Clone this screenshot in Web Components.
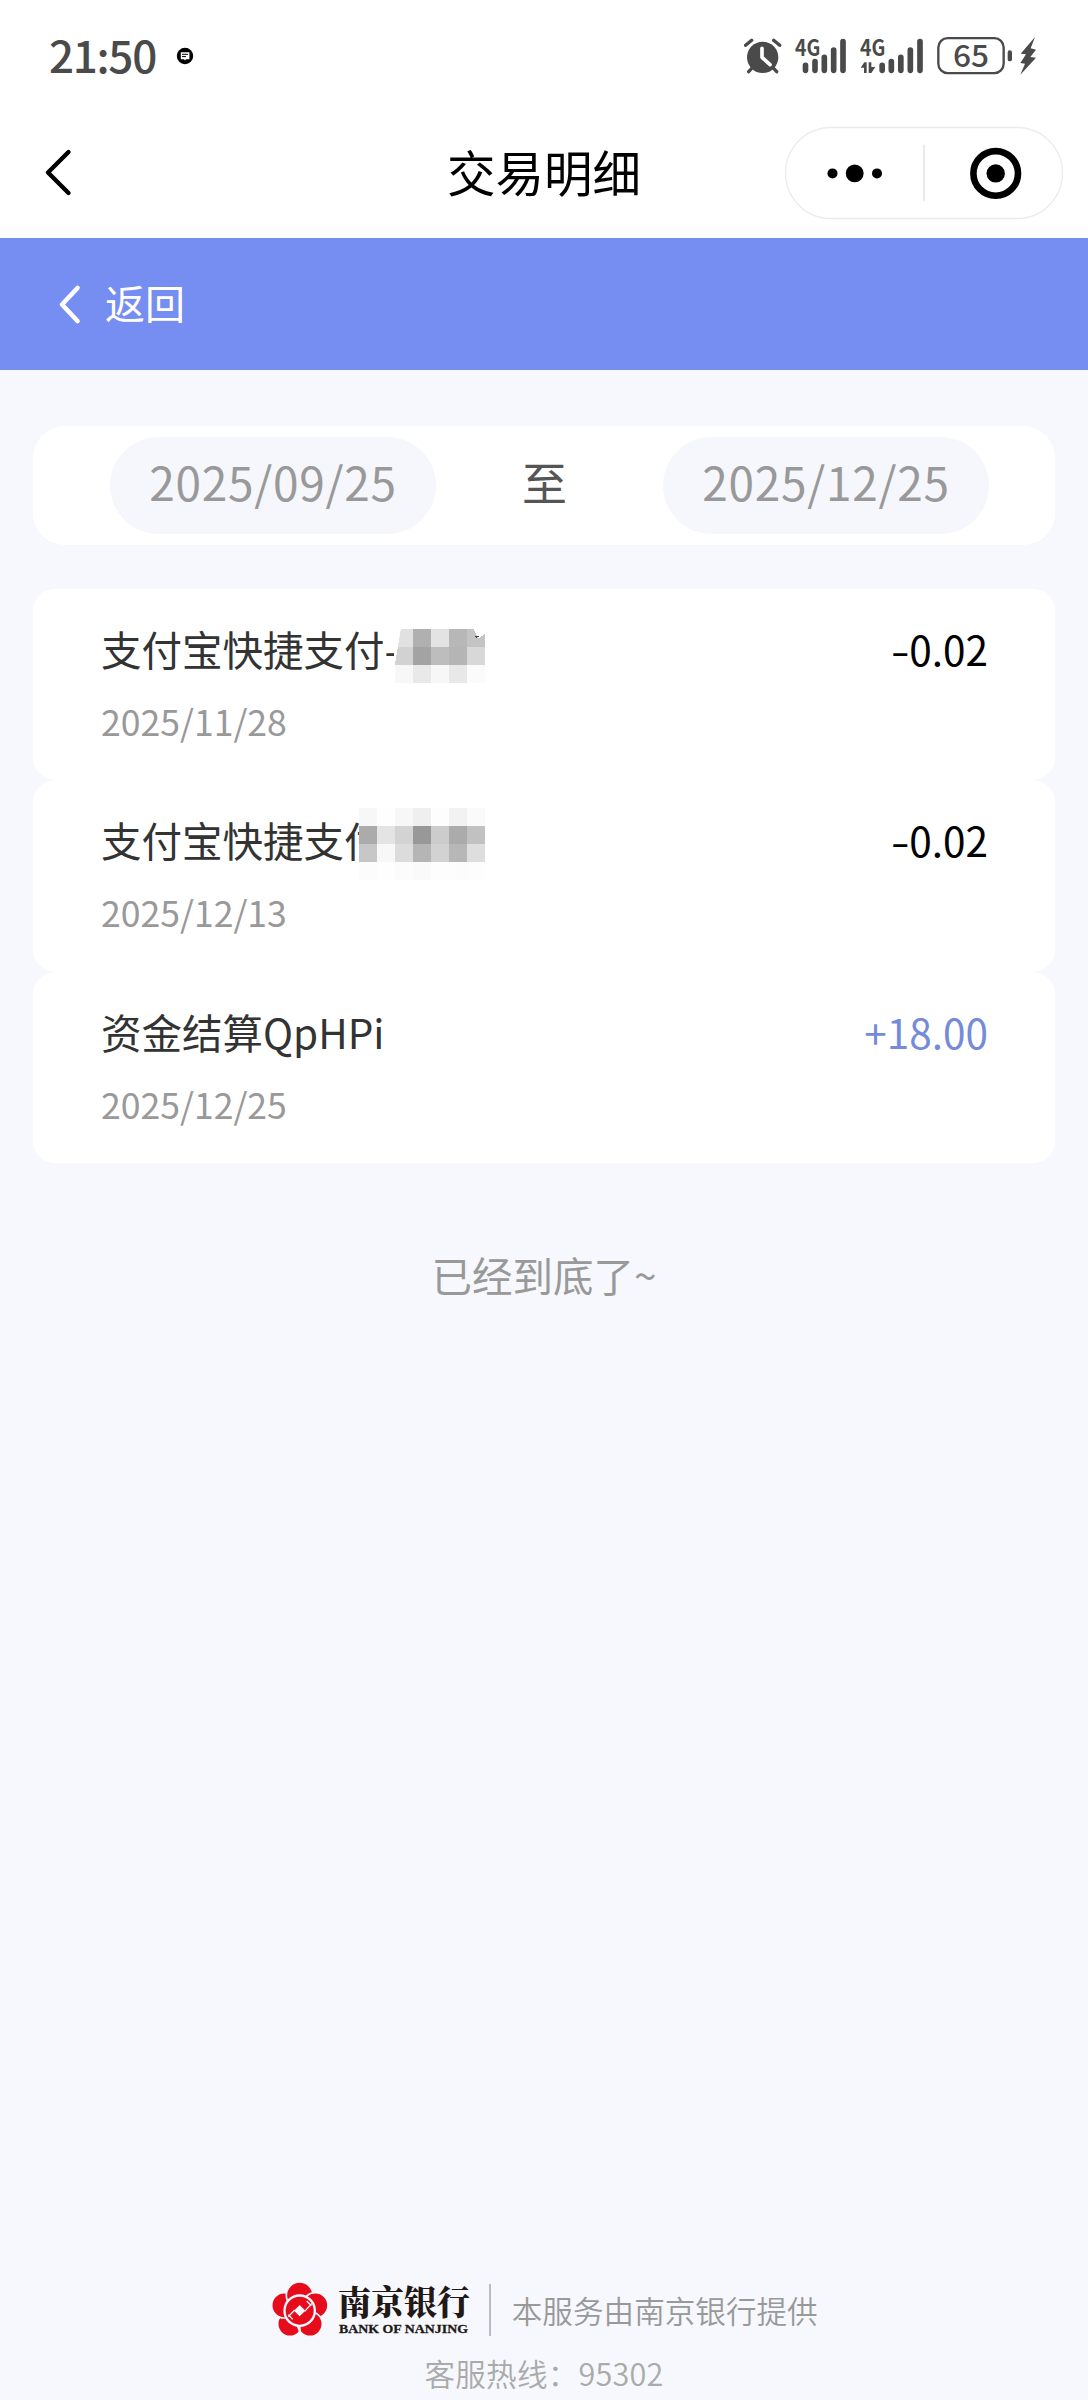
<!DOCTYPE html>
<html lang="zh-CN">
<head>
<meta charset="utf-8">
<title>交易明细</title>
<style>
body{margin:0;background:#f6f8fd;font-family:"Noto Sans CJK SC",sans-serif}
</style>
</head>
<body>
<bank-page></bank-page>
<script>
function define(name, html){
  const t=document.createElement('template');
  t.innerHTML=html;
  customElements.define(name,class extends HTMLElement{
    constructor(){super();this.attachShadow({mode:'open'}).append(t.content.cloneNode(true));}
  });
}

define('status-bar',`
<style>
:host{display:flex;height:112px;box-sizing:border-box;padding:0 0 0 49px;background:#fff;color:#4a4a4a;align-items:flex-start}
.time{font-size:44px;font-weight:500;line-height:64px;margin-top:22px;width:108px;white-space:nowrap;letter-spacing:-1.300px}
.msg{width:18px;height:18px;margin:47px 0 0 19px}
.right{width:368px;height:80px;margin:20px 0 0 auto}
svg{display:block}
</style>
<div class="time">21:50</div>
<svg class="msg" viewBox="0 0 18 18"><circle cx="9" cy="9" r="8.2" fill="#000"/><path d="M4.800 5.200h8.600v7H10l-1 1.300-1-1.300H4.800z" fill="#fff"/><path d="M6 7.300h6M6 9.600h4" stroke="#000" stroke-width="1"/></svg>
<svg class="right" viewBox="0 0 1104 240" fill="#4a4a4a" font-family="Noto Sans CJK SC, sans-serif">
  <circle cx="128" cy="112" r="47"/>
  <path d="M77 76l18-15M161 61l18 15M98 142l-12 13M158 142l12 13" stroke="#4a4a4a" stroke-width="10" stroke-linecap="round" fill="none"/>
  <path d="M126 85v27l24 22" stroke="#fff" stroke-width="11" stroke-linecap="round" stroke-linejoin="round" fill="none"/>
  <text x="225" y="107" font-size="66" font-weight="700" textLength="76" lengthAdjust="spacingAndGlyphs">4G</text>
  <path d="M256.500 136v15M285 125v26M313 112v39M341 90v61M369 65v86" stroke="#4a4a4a" stroke-width="17" stroke-linecap="round"/>
  <text x="420" y="107" font-size="66" font-weight="700" textLength="76" lengthAdjust="spacingAndGlyphs">4G</text>
  <path d="M422 143l11-16h7v32h-8v-16zM446 127h8v14h12l-12 18h-8z"/>
  <path d="M486.500 136v15M514 125v26M542.500 112v39M571 90v61M600 65v86" stroke="#4a4a4a" stroke-width="17" stroke-linecap="round"/>
  <rect x="655" y="54.500" width="196" height="105" rx="28" fill="none" stroke="#4a4a4a" stroke-width="7"/>
  <text x="699" y="142" font-size="91" font-weight="500" textLength="108" lengthAdjust="spacingAndGlyphs">65</text>
  <rect x="863" y="91" width="13" height="33" rx="6.500"/>
  <path d="M945 51l-43 50 16 2-17 26 14 2-14 33 47-51-17-2 17-22-16-4z"/>
</svg>`);

define('nav-capsule',`
<style>:host{display:block;width:280px;height:94px}svg{display:block}</style>
<svg width="280" height="94" viewBox="0 0 280 94">
<rect x="1.500" y="1.500" width="277" height="91" rx="45.500" fill="#fff" stroke="#ebebeb" stroke-width="1.300"/>
<path d="M140 19v56" stroke="#dcdcdc" stroke-width="1.200"/>
<circle cx="48.500" cy="47.400" r="5"/><circle cx="70.700" cy="47.400" r="8.900"/><circle cx="93" cy="47.400" r="5"/>
<circle cx="211.700" cy="47.400" r="22.300" fill="none" stroke="#000" stroke-width="6.600"/><circle cx="211.700" cy="47.400" r="9.200"/>
</svg>`);

define('nav-bar',`
<style>
:host{display:grid;grid-template-columns:304px 1fr 304px;height:126px;background:#fff;color:#000}
.back{margin:36px 0 0 43px}
.title{font-size:48.500px;line-height:118px;text-align:center;white-space:nowrap;font-weight:400}
nav-capsule{margin:14px 0 0 0}
</style>
<svg class="back" width="32" height="50" viewBox="0 0 32 50"><path d="M25.500 4L5 24.500l20.500 20.500" fill="none" stroke="#000" stroke-width="4.400" stroke-linecap="round" stroke-linejoin="round"/></svg>
<div class="title"><slot></slot></div>
<nav-capsule></nav-capsule>`);

define('return-bar',`
<style>
:host{display:flex;align-items:center;height:132px;background:#768df1;color:#fff;font-size:40px;line-height:60px;padding-left:56px}
svg{margin-right:21px}
span{margin-bottom:5px}
</style>
<svg width="28" height="44" viewBox="0 0 28 44"><path d="M21.500 6L6 22.500 21.500 39" fill="none" stroke="#fff" stroke-width="4.600" stroke-linecap="round" stroke-linejoin="round"/></svg>
<span><slot></slot></span>`);

define('date-pill',`
<style>:host{display:block;width:326px;height:97px;line-height:89px;border-radius:49px;background:#f6f7fc;color:#999;font-size:46px;text-align:center;letter-spacing:.7px}</style><slot></slot>`);

define('date-range',`
<style>
:host{display:flex;box-sizing:border-box;height:119px;margin:56px 33px 0;padding:0 66px 0 77px;background:#fff;border-radius:32px;align-items:center;justify-content:space-between}
.to{font-size:45px;line-height:89px;color:#555;height:97px;margin-right:10px}
</style>
<date-pill><slot name="from"></slot></date-pill><div class="to">至</div><date-pill><slot name="until"></slot></date-pill>`);

define('transaction-item',`
<style>
:host{display:flex;justify-content:space-between;box-sizing:border-box;height:191.300px;padding:30px 67px 0 68px;background:#fff;border-radius:22px;font-size:40.500px;line-height:60px;color:#333;white-space:nowrap;position:relative}
.date{font-size:35.600px;line-height:52px;color:#999;margin-top:16px}
.amount{color:var(--amount,#000)}
</style>
<div><div><slot name="title"></slot></div><div class="date"><slot name="date"></slot></div></div>
<div class="amount"><slot name="amount"></slot></div>
<slot name="mask"></slot>`);

define('minus-sign',`
<style>:host{display:inline-block;transform:scaleX(1.35);transform-origin:85% 50%}</style><slot></slot>`);

define('mosaic-mask',`
<style>:host{position:absolute;left:318px;top:0;width:160px;height:100px}svg{display:block}</style>
<svg width="160" height="100" shape-rendering="crispEdges"></svg>`);

{
  const Base=customElements.get('mosaic-mask');
  customElements.define('pixel-mask',class extends Base{
    connectedCallback(){
      const rows=this.getAttribute('rows').split('|').map(r=>r.split(' '));
      const top=+this.getAttribute('top');
      let s='';
      rows.forEach((r,j)=>r.forEach((c,i)=>{
        if(c!=='-')s+='<rect x="'+(8+i*18)+'" y="'+(top+j*18)+'" width="18" height="18" fill="#'+c+'"/>';
      }));
      if(this.hasAttribute('slant'))s+='<path d="M43 39.500h7L44 75h-1zM122 39.500h13v5l-8 5z" fill="#fff"/><path d="M123.500 47h5l-3 2z" fill="#444"/>';
      this.shadowRoot.querySelector('svg').innerHTML=s;
    }
  });
}

define('bank-logo',`
<style>
:host{display:flex;align-items:flex-start;color:#221815}
.word{margin-left:8px;width:136px}
svg{display:block;overflow:visible}
</style>
<svg width="56" height="54" viewBox="35 37 168 162">
<g fill="#e60c1b" stroke="#f6f8fd" stroke-width="5">
<circle cx="89" cy="163" r="37"/>
<circle cx="72" cy="107" r="38"/>
<circle cx="118" cy="77" r="40"/>
<circle cx="165" cy="107" r="38"/>
<circle cx="149" cy="163" r="37"/>
</g>
<path d="M118 160v42" stroke="#f6f8fd" stroke-width="6"/>
<circle cx="118" cy="123" r="49" fill="#f6f8fd"/>
<circle cx="118" cy="123" r="42" fill="#e60c1b"/>
<path d="M118 106l17 17-17 17-17-17z" fill="#f6f8fd"/>
<path d="M103 121l-19 20M133 125l22-24M84 135l13 14M139 94l14 14" stroke="#f6f8fd" stroke-width="4" fill="none"/>
</svg>
<svg class="word" width="136" height="58" viewBox="-2 0 136 58" fill="#221815">
<text x="0" y="33" font-family="Noto Serif CJK SC, Noto Sans CJK SC, sans-serif" font-size="34" font-weight="900" textLength="132" lengthAdjust="spacingAndGlyphs">南京银行</text>
<text x="1" y="51" font-family="Liberation Serif, serif" font-size="13.500" font-weight="700" textLength="129" lengthAdjust="spacingAndGlyphs" stroke="#221815" stroke-width=".3">BANK OF NANJING</text>
</svg>`);

define('page-footer',`
<style>
:host{display:flex;flex-direction:column;align-items:center;color:#999;font-size:30.600px;font-weight:350;line-height:44px;white-space:nowrap}
.row{display:flex;height:58px;margin-left:2px}
.line{width:1.500px;height:52px;background:#bcbcbc;margin:2px 21px 0 17px}
.by{margin-top:6px}
.tel{color:#aaa;margin-top:11px;letter-spacing:.2px}
</style>
<div class="row"><bank-logo></bank-logo><div class="line"></div><div class="by"><slot name="provider"></slot></div></div>
<div class="tel"><slot name="hotline"></slot></div>`);

define('bank-page',`
<style>
:host{display:flex;flex-direction:column;width:1088px;height:2400px;overflow:hidden;background:#f6f8fd}
.list{display:flex;flex-direction:column;margin:44px 33px 0}
.end{text-align:center;color:#999;font-size:40.500px;line-height:60px;margin-top:82px}
page-footer{margin-top:auto;height:118px}
</style>
<status-bar></status-bar>
<nav-bar>交易明细</nav-bar>
<return-bar>返回</return-bar>
<date-range><span slot="from">2025/09/25</span><span slot="until">2025/12/25</span></date-range>
<div class="list">
<transaction-item><span slot="title">支付宝快捷支付-</span><span slot="date">2025/11/28</span><span slot="amount"><minus-sign>-</minus-sign>0.02</span>
<pixel-mask slot="mask" slant top="39.500" rows="- - e1e1e1 b0b0b0 e3e3e3 b7b7b7 c4c4c4|- - d2d2d2 a3a3a3 bdbdbd b5b5b5 d8d8d8|- - f7f7f7 e9e9e9 f7f7f7 e8e8e8 fbfbfb"></pixel-mask></transaction-item>
<transaction-item><span slot="title">支付宝快捷支付</span><span slot="date">2025/12/13</span><span slot="amount"><minus-sign>-</minus-sign>0.02</span>
<pixel-mask slot="mask" top="28" rows="f7f7f7 fefefe f7f7f7 efefef fdfdfd f2f2f2 fafafa|ababab e4e4e4 d3d3d3 989898 cccccc ababab c1c1c1|c7c7c7 f8f8f8 dcdcdc b5b5b5 d2d2d2 b7b7b7 dedede|fcfcfc fefefe fcfcfc fafafa fdfdfd fcfcfc fdfdfd"></pixel-mask></transaction-item>
<transaction-item style="--amount:#748bd9"><span slot="title">资金结算QpHPi</span><span slot="date">2025/12/25</span><span slot="amount">+18.00</span></transaction-item>
</div>
<div class="end">已经到底了~</div>
<page-footer><span slot="provider">本服务由南京银行提供</span><span slot="hotline">客服热线：95302</span></page-footer>`);
</script>
</body>
</html>
